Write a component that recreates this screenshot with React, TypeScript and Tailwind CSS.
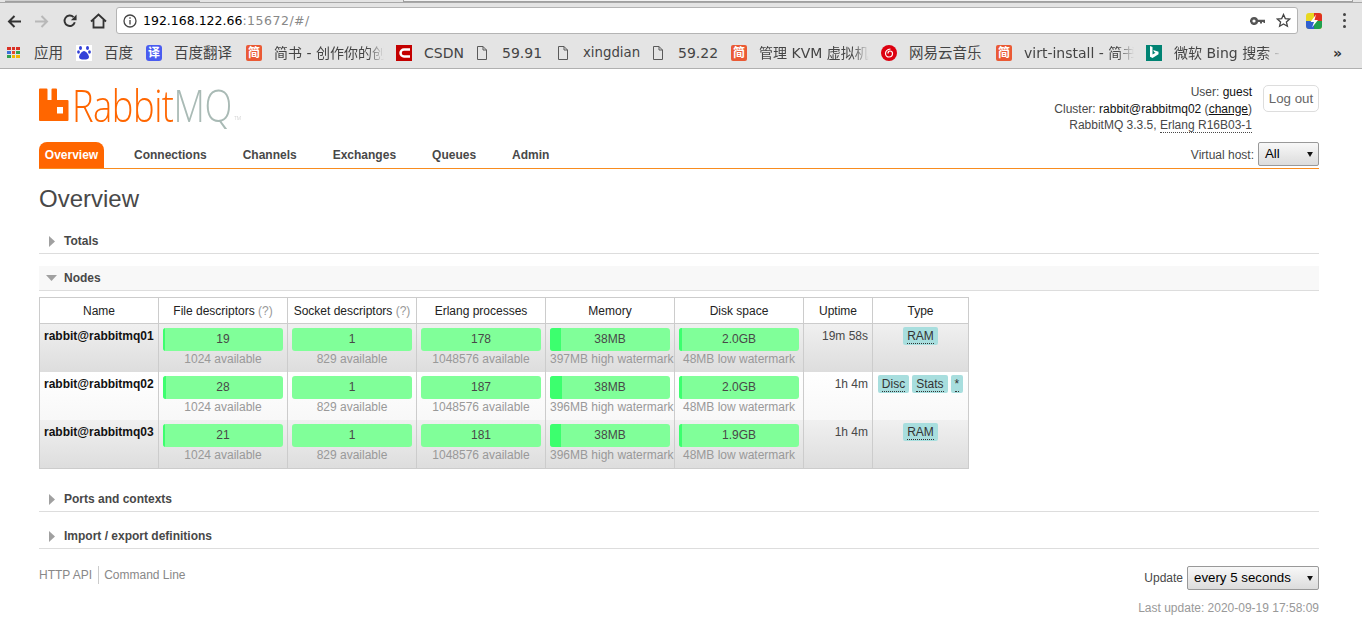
import type { ReactNode } from "react";

type BarType = {
  label: string;
  sub: string;
  fill: number;
};

type NodeType = {
  name: string;
  fd: BarType;
  sockets: BarType;
  procs: BarType;
  memory: BarType;
  disk: BarType;
  uptime: string;
  types: string[];
};

const nodes: NodeType[] = [
  {
    name: "rabbit@rabbitmq01",
    fd: { label: "19", sub: "1024 available", fill: 2 },
    sockets: { label: "1", sub: "829 available", fill: 0 },
    procs: { label: "178", sub: "1048576 available", fill: 0 },
    memory: { label: "38MB", sub: "397MB high watermark", fill: 11 },
    disk: { label: "2.0GB", sub: "48MB low watermark", fill: 3 },
    uptime: "19m 58s",
    types: ["RAM"],
  },
  {
    name: "rabbit@rabbitmq02",
    fd: { label: "28", sub: "1024 available", fill: 3 },
    sockets: { label: "1", sub: "829 available", fill: 0 },
    procs: { label: "187", sub: "1048576 available", fill: 0 },
    memory: { label: "38MB", sub: "396MB high watermark", fill: 12 },
    disk: { label: "2.0GB", sub: "48MB low watermark", fill: 3 },
    uptime: "1h 4m",
    types: ["Disc", "Stats", "*"],
  },
  {
    name: "rabbit@rabbitmq03",
    fd: { label: "21", sub: "1024 available", fill: 2 },
    sockets: { label: "1", sub: "829 available", fill: 0 },
    procs: { label: "181", sub: "1048576 available", fill: 0 },
    memory: { label: "38MB", sub: "396MB high watermark", fill: 11 },
    disk: { label: "1.9GB", sub: "48MB low watermark", fill: 3 },
    uptime: "1h 4m",
    types: ["RAM"],
  },
];

const PageIcon = () => (
  <svg width="12" height="14" viewBox="0 0 12 14" fill="none" stroke="#5a5a5a" strokeWidth="1">
    <path d="M1.500 .5h5.500l3.500 3.500v9.500h-9z M7 .5v3.500h3.500" />
  </svg>
);

const JianIcon = () => (
  <div className="w-4 h-4 rounded-[2px] bg-[#ea5a35] text-white text-[12px] leading-4 text-center font-bold">简</div>
);

const BookmarkItem = ({
  icon,
  text,
  w,
  fade,
  size = "text-[14px]",
}: {
  icon: ReactNode;
  text: string;
  w: number;
  fade?: boolean;
  size?: string;
}) => (
  <div className="flex items-center shrink-0">
    <div className="w-[16px] flex justify-center">{icon}</div>
    <div
      className={`ml-3 whitespace-nowrap text-[#444] ${size} ${
        fade ? "overflow-hidden [mask-image:linear-gradient(to_right,black_85%,transparent)]" : ""
      }`}
      style={{ width: w }}
    >
      {text}
    </div>
  </div>
);

const BrowserBar = () => (
  <div className="h-[69px] bg-[#e4e4e4] border-b border-[#b0b0b0] [font-family:'DejaVu_Sans','Noto_Sans_CJK_SC',sans-serif]">
    <div className="h-[3px] border-b border-[#a8a8a8] flex">
      <div className="ml-[5px] w-[195px] h-[2px] bg-[#cfcfcf] border-b border-[#a0a0a0]" />
      <div className="ml-[203px] w-[950px] h-[2px] bg-[#f2f2f2] border-b border-l border-r border-[#a0a0a0]" />
    </div>
    <div className="h-[33px] pt-[2px] flex items-center">
      <div className="w-[116px] flex items-center pl-[7px] gap-[14px] shrink-0 mt-[1px]">
        <svg width="14" height="13" viewBox="0 0 14 13" fill="none" stroke="#333" strokeWidth="2">
          <path d="M14 6.500H2M7.500 1L2 6.500 7.500 12" />
        </svg>
        <svg width="14" height="13" viewBox="0 0 14 13" fill="none" stroke="#b8b8b8" strokeWidth="2">
          <path d="M0 6.500h12M6.500 1L12 6.500 6.500 12" />
        </svg>
        <svg width="14" height="14" viewBox="0 0 16 16" fill="none" stroke="#333" strokeWidth="2.200">
          <path d="M13.500 9.500A6 6 0 1 1 12 3.500" />
          <path d="M15.500 .5v6.500H9z" fill="#333" stroke="none" />
        </svg>
        <svg className="-ml-px" width="17" height="16" viewBox="0 0 17 16" fill="none" stroke="#333" strokeWidth="1.800">
          <path d="M1 8.500L8.500 1.500 16 8.500M3.500 7v7.500h10V7" />
        </svg>
      </div>
      <div className="w-[1182px] h-[27px] bg-white border border-[#b4b4b4] rounded-[3px] flex items-center shrink-0">
        <svg className="ml-[6px]" width="14" height="14" viewBox="0 0 14 14" fill="none" stroke="#444" strokeWidth="1.300">
          <circle cx="7" cy="7" r="6" />
          <path d="M7 6v4.500M7 3.200v1.500" />
        </svg>
        <div className="ml-[6px] text-[12.500px] text-black">
          192.168.122.66<span className="text-[#888] tracking-[0.5px]">:15672/#/</span>
        </div>
        <div className="ml-auto flex items-center gap-[11px] mr-[6px]">
          <svg width="15" height="8" viewBox="0 0 15 8" fill="#555">
            <path d="M4 0a4 4 0 1 1-3.800 5H0V3h.2A4 4 0 0 1 4 0zm0 2.400a1.600 1.600 0 1 0 0 3.200 1.600 1.600 0 0 0 0-3.200zM7.500 2.800H15V6h-1.500V5H12v1.500h-2V5H7.500z" />
          </svg>
          <svg width="15" height="15" viewBox="0 0 15 15" fill="none" stroke="#444" strokeWidth="1.300">
            <path d="M7.500 1.500l1.800 4.100 4.400.4-3.300 2.900 1 4.300-3.900-2.300-3.900 2.300 1-4.300L1.300 6l4.400-.4z" />
          </svg>
        </div>
      </div>
      <div className="ml-[8px] w-4 h-4 rounded-[3px] overflow-hidden relative shrink-0 bg-[#e8d820]">
        <div className="absolute right-0 top-0 w-2 h-2 bg-[#e03020]" />
        <div className="absolute left-0 bottom-0 w-2 h-2 bg-[#3060d0]" />
        <div className="absolute right-0 bottom-0 w-2 h-2 bg-[#20a050]" />
        <svg className="absolute inset-0" width="16" height="16" viewBox="0 0 16 16" fill="#fff">
          <path d="M10 1.500L4.500 9H8l-2 5.500L12 7H8.500z" />
        </svg>
      </div>
      <div className="ml-[21px] flex flex-col gap-[3px] shrink-0">
        <div className="w-[3px] h-[3px] rounded-full bg-[#444]" />
        <div className="w-[3px] h-[3px] rounded-full bg-[#444]" />
        <div className="w-[3px] h-[3px] rounded-full bg-[#444]" />
      </div>
    </div>
    <div className="h-[32px] pt-[1px] flex items-center pl-[7px] gap-[12px] relative">
      <div className="flex items-center shrink-0 w-[57px]">
        <div className="grid grid-cols-3 gap-[1px] w-[13px]">
          <div className="h-[3px] bg-[#d93025]" />
          <div className="h-[3px] bg-[#d93025]" />
          <div className="h-[3px] bg-[#d93025]" />
          <div className="h-[3px] bg-[#3a6fd8]" />
          <div className="h-[3px] bg-[#e04a30]" />
          <div className="h-[3px] bg-[#30a050]" />
          <div className="h-[3px] bg-[#30a050]" />
          <div className="h-[3px] bg-[#f2b600]" />
          <div className="h-[3px] bg-[#f2b600]" />
        </div>
        <div className="ml-[14px] text-[14.500px] text-[#444] whitespace-nowrap">应用</div>
      </div>
      <BookmarkItem
        icon={
          <div className="w-4 h-4 bg-white flex items-center justify-center">
            <svg width="14" height="15" viewBox="0 0 14 15" fill="#3240d8">
              <ellipse cx="3.500" cy="3" rx="1.500" ry="2" />
              <ellipse cx="10.500" cy="3" rx="1.500" ry="2" />
              <ellipse cx="1.500" cy="7" rx="1.400" ry="1.800" />
              <ellipse cx="12.500" cy="7" rx="1.400" ry="1.800" />
              <path d="M7 6c2 0 5 4 5 6s-2 2.500-5 2.500S2 14 2 12s3-6 5-6z" />
            </svg>
          </div>
        }
        text="百度"
        w={30}
        size="text-[14.500px]"
      />
      <BookmarkItem
        icon={<div className="w-4 h-4 rounded-[3px] bg-[#4a5cf0] text-white text-[12px] leading-4 text-center font-bold">译</div>}
        text="百度翻译"
        w={60}
        size="text-[14.500px]"
      />
      <BookmarkItem icon={<JianIcon />} text="简书 - 创作你的创作" w={110} fade />
      <BookmarkItem
        icon={
          <div className="w-4 h-4 bg-[#c40000] flex items-center justify-center">
            <svg width="14" height="10" viewBox="0 0 14 10" fill="none" stroke="#fff" strokeWidth="2.500">
              <path d="M13 1.500H7a3.500 3.500 0 0 0 0 7h6" />
            </svg>
          </div>
        }
        text="CSDN"
        w={38}
      />
      <BookmarkItem icon={<PageIcon />} text="59.91" w={41} />
      <BookmarkItem icon={<PageIcon />} text="xingdian" w={55} size="text-[13.300px]" />
      <BookmarkItem icon={<PageIcon />} text="59.22" w={41} />
      <BookmarkItem icon={<JianIcon />} text="管理 KVM 虚拟机的" w={110} fade />
      <BookmarkItem
        icon={
          <div className="w-4 h-4 rounded-full bg-[#dd0010] flex items-center justify-center">
            <svg width="10" height="10" viewBox="0 0 10 10" fill="none" stroke="#fff" strokeWidth="1.200">
              <path d="M6.500 1C3 1.500 1.500 3.500 1.500 5.500a3.500 3.500 0 0 0 7 0C8.500 4 7.500 3 6 3S4 4 4 5.500" />
            </svg>
          </div>
        }
        text="网易云音乐"
        w={75}
        size="text-[14.500px]"
      />
      <BookmarkItem icon={<JianIcon />} text="virt-install - 简书社区" w={110} fade />
      <BookmarkItem
        icon={
          <div className="w-4 h-4 bg-[#008373] flex items-center justify-center">
            <svg width="10" height="13" viewBox="0 0 10 13" fill="#fff">
              <path d="M1 0l2.500 1v7.500l3-1.700-1.400-.7-.9-2.200L9.500 5.700v2.600l-6 3.700L1 10.700z" />
            </svg>
          </div>
        }
        text="微软 Bing 搜索 - 国内版"
        w={107}
        fade
      />
      <div className="absolute left-[1333px] text-[14px] font-bold text-[#333]">»</div>
    </div>
  </div>
);

const Logo = () => (
  <div className="flex items-start h-[38px]">
    <svg width="30" height="33" viewBox="0 0 30 33" className="shrink-0">
      <path
        fillRule="evenodd"
        fill="#ff6600"
        d="M0 1.500a1 1 0 0 1 1-1h6.500a1 1 0 0 1 1 1V12h4V1.500a1 1 0 0 1 1-1H17a1 1 0 0 1 1 1V12h10.500a1 1 0 0 1 1 1v19a1 1 0 0 1-1 1H1a1 1 0 0 1-1-1z M18 19v6.500h6V19z"
      />
    </svg>
    <div className="ml-[3px] -mt-[8px] flex items-baseline origin-left scale-x-[0.826] text-[44px] leading-[50px] font-light [font-family:'Open_Sans',sans-serif] tracking-[-0.6px]">
      <span className="text-[#ff6600]">Rabbit</span>
      <span className="text-[#a9bab5]">MQ</span>
      <span className="text-[6px] text-[#bbb] tracking-normal ml-[3px] -translate-y-[2px]">TM</span>
    </div>
  </div>
);

const SelectBox = ({ text, className }: { text: string; className: string }) => (
  <div
    className={`h-6 flex items-center justify-between pl-[6px] pr-[5px] text-[13.300px] text-black border border-[#999] rounded-[2px] bg-gradient-to-b from-[#f8f8f8] to-[#dcdcdc] ${className}`}
  >
    {text}
    <svg width="6" height="5" viewBox="0 0 7 6" fill="#111">
      <path d="M0 0h7L3.500 6z" />
    </svg>
  </div>
);

const NavItem = ({ label, active }: { label: string; active?: boolean }) =>
  active ? (
    <div className="h-[26px] w-[65px] bg-[#ff6600] rounded-t-[8px] text-white font-bold flex items-center justify-center">
      {label}
    </div>
  ) : (
    <div className="h-[26px] px-[18px] font-bold text-[#484848] flex items-center">{label}</div>
  );

const Section = ({ title, open }: { title: string; open?: boolean }) => (
  <div className={`h-[25px] flex items-center border-b border-[#dddddd] ${open ? "bg-[#f8f8f8]" : ""}`}>
    <div className="w-[25px] flex justify-center shrink-0">
      {open ? (
        <svg width="11" height="6" viewBox="0 0 11 6" fill="#a0a0a0">
          <path d="M0 0h11L5.500 6z" />
        </svg>
      ) : (
        <svg width="6" height="11" viewBox="0 0 6 11" fill="#a0a0a0" className="ml-[1px]">
          <path d="M0 0l6 5.500L0 11z" />
        </svg>
      )}
    </div>
    <div className="font-bold text-[#484848]">{title}</div>
  </div>
);

const BarCell = ({ bar }: { bar: BarType }) => (
  <td className="border-x border-[#cccccc] px-1 pt-1 align-top">
    <div className="relative w-[120px] h-[23px] bg-[#80ff99] rounded-[3px] overflow-hidden text-center leading-[23px] text-[#484848]">
      <div className="absolute left-0 top-0 h-full bg-[#3cff6e]" style={{ width: bar.fill }} />
      <span className="relative">{bar.label}</span>
    </div>
    <div className="h-[17px] leading-[17px] text-center text-[#999999] whitespace-nowrap">{bar.sub}</div>
  </td>
);

const NodesTable = () => (
  <table className="mt-[6px] w-[930px] table-fixed border-collapse border border-[#cccccc]">
    <colgroup>
      <col className="w-[119px]" />
      <col className="w-[129px]" />
      <col className="w-[129px]" />
      <col className="w-[129px]" />
      <col className="w-[129px]" />
      <col className="w-[129px]" />
      <col className="w-[69px]" />
      <col className="w-[96px]" />
    </colgroup>
    <thead>
      <tr className="h-[26px] bg-white">
        {["Name", "File descriptors", "Socket descriptors", "Erlang processes", "Memory", "Disk space", "Uptime", "Type"].map(
          (title) => (
            <th key={title} className="border border-[#cccccc] font-normal text-[#222] whitespace-nowrap p-0">
              {title}
              {title.endsWith("descriptors") && <span className="text-[#999]"> (?)</span>}
            </th>
          ),
        )}
      </tr>
    </thead>
    <tbody>
      {nodes.map((node, i) => (
        <tr
          key={node.name}
          className={`${i === 2 ? "h-[49px]" : "h-[48px]"} ${
            i % 2 === 0
              ? "bg-gradient-to-b from-[#f0f0f0] to-[#dddddd]"
              : "bg-gradient-to-b from-[#ffffff] to-[#f8f8f8]"
          }`}
        >
          <td className="border-x border-[#cccccc] pl-1 pt-[4px] align-top font-bold text-[#111] whitespace-nowrap">
            {node.name}
          </td>
          <BarCell bar={node.fd} />
          <BarCell bar={node.sockets} />
          <BarCell bar={node.procs} />
          <BarCell bar={node.memory} />
          <BarCell bar={node.disk} />
          <td className="border-x border-[#cccccc] pr-1 pt-[4px] align-top text-right text-[#484848] whitespace-nowrap">
            {node.uptime}
          </td>
          <td className="border-x border-[#cccccc] pt-[3px] align-top">
            <div className="flex justify-center gap-[3px]">
              {node.types.map((type) => (
                <div key={type} className="h-[18px] px-1 bg-[#a8dede] rounded-[2px] leading-[19px] text-[#333]">
                  <span className="border-b border-dotted border-[#333]">{type}</span>
                </div>
              ))}
            </div>
          </td>
        </tr>
      ))}
    </tbody>
  </table>
);

const App = () => {
  return (
    <div className="h-[638px] overflow-hidden bg-white text-[12px] leading-[16px] [font-family:'Liberation_Sans',Arial,sans-serif]">
      <BrowserBar />
      <div className="pl-[39px] pr-[43px]">
        <div className="pt-[19px] flex justify-between h-[73px] relative">
          <Logo />
          <div className="absolute right-0 top-[16px] flex items-start">
            <div className="text-right text-[#484848] leading-[16.500px] mr-[11px] -mt-[1px]">
              <div>
                User: <span className="text-[#111]">guest</span>
              </div>
              <div>
                Cluster: <span className="text-[#111]">rabbit@rabbitmq02</span> (
                <span className="text-[#111] underline">change</span>)
              </div>
              <div>
                RabbitMQ 3.3.5, <span className="border-b border-dotted border-[#484848]">Erlang R16B03-1</span>
              </div>
            </div>
            <div className="w-[56px] h-[27px] border border-[#dddddd] rounded-[5px] text-[13.300px] text-[#666] flex items-center justify-center">
              Log out
            </div>
          </div>
        </div>
        <div className="h-[27px] flex border-b border-[#f88c1f] relative">
          <NavItem label="Overview" active />
          <div className="w-[12px]" />
          <NavItem label="Connections" />
          <NavItem label="Channels" />
          <NavItem label="Exchanges" />
          <NavItem label="Queues" />
          <NavItem label="Admin" />
          <div className="ml-auto flex items-start">
            <div className="mr-1 mt-[5px] text-[#484848]">Virtual host:</div>
            <SelectBox text="All" className="w-[61px]" />
          </div>
        </div>
        <h1 className="mt-[16px] h-[28px] text-[24px] leading-[28px] text-[#484848]">Overview</h1>
        <div className="mt-[16px]">
          <Section title="Totals" />
        </div>
        <div className="mt-[12px]">
          <Section title="Nodes" open />
        </div>
        <NodesTable />
        <div className="mt-[18px]">
          <Section title="Ports and contexts" />
        </div>
        <div className="mt-[12px]">
          <Section title="Import / export definitions" />
        </div>
        <div className="mt-[17px] flex justify-between items-start">
          <div className="flex items-center text-[#888]">
            <div className="pr-[6px] border-r border-[#cccccc] h-[18px] leading-[18px]">HTTP API</div>
            <div className="pl-[5px]">Command Line</div>
          </div>
          <div className="flex flex-col items-end">
            <div className="flex items-center">
              <div className="mr-[4px] text-[#484848]">Update</div>
              <SelectBox text="every 5 seconds" className="w-[132px]" />
            </div>
            <div className="mt-[10px] text-[#999]">Last update: 2020-09-19 17:58:09</div>
          </div>
        </div>
      </div>
    </div>
  );
};

export default App;
